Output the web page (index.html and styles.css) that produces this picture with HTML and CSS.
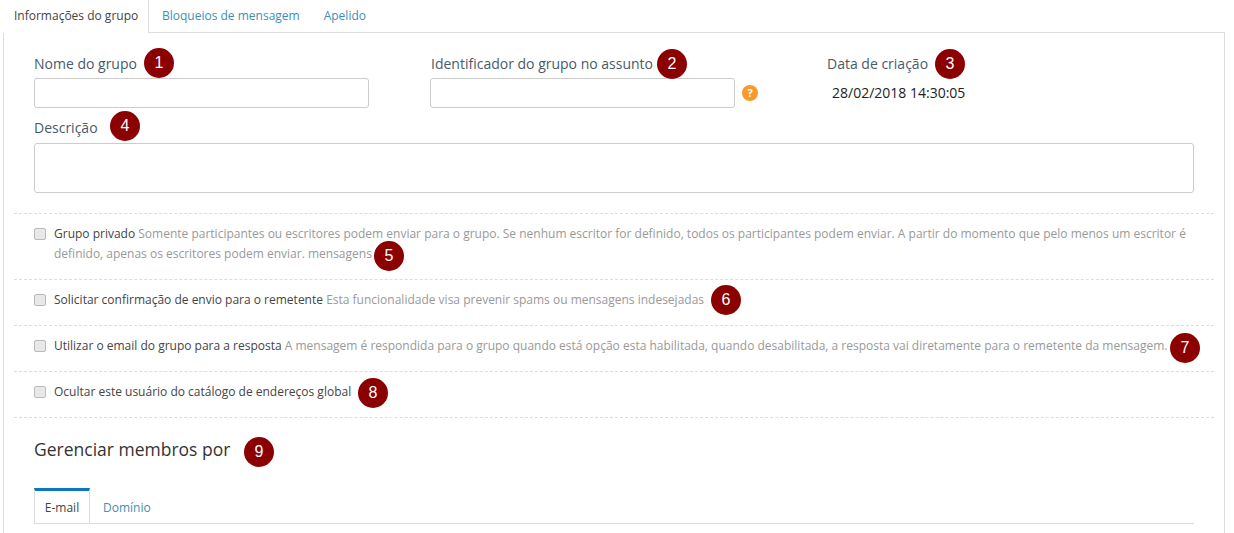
FILE: index.html
```html
<!doctype html>
<html>
<head>
    <meta charset="utf-8">
    <link rel="stylesheet" href="styles.css">
</head>
<body>
    <ul class="tabs">
        <li class="tab active">Informações do grupo</li>
        <li class="tab">Bloqueios de mensagem</li>
        <li class="tab">Apelido</li>
    </ul>
    <div class="panel">
        <div class="fields">
            <div class="field field-name">
                <label>Nome do grupo</label>
                <input type="text">
            </div>
            <div class="field field-subject">
                <label>Identificador do grupo no assunto</label>
                <div class="input-help">
                    <input type="text">
                    <span class="help">?</span>
                </div>
            </div>
            <div class="field field-date">
                <label>Data de criação</label>
                <div class="date">28/02/2018 14:30:05</div>
            </div>
        </div>
        <div class="field field-desc">
            <label>Descrição</label>
            <textarea></textarea>
        </div>

        <div class="option option-first">
            <span class="check"></span>
            <p>Grupo privado <span class="hint">Somente participantes ou escritores podem enviar para o grupo. Se nenhum escritor for definido, todos os participantes podem enviar. A partir do momento que pelo menos um escritor é definido, apenas os escritores podem enviar. mensagens</span></p>
        </div>
        <div class="option">
            <span class="check"></span>
            <p>Solicitar confirmação de envio para o remetente <span class="hint">Esta funcionalidade visa prevenir spams ou mensagens indesejadas</span></p>
        </div>
        <div class="option">
            <span class="check"></span>
            <p>Utilizar o email do grupo para a resposta <span class="hint">A mensagem é respondida para o grupo quando está opção esta habilitada, quando desabilitada, a resposta vai diretamente para o remetente da mensagem.</span></p>
        </div>
        <div class="option option-last">
            <span class="check"></span>
            <p>Ocultar este usuário do catálogo de endereços global</p>
        </div>

        <h2>Gerenciar membros por</h2>
        <ul class="subtabs">
            <li class="subtab active">E-mail</li>
            <li class="subtab">Domínio</li>
        </ul>
    </div>

    <span class="badge b1">1</span>
    <span class="badge b2">2</span>
    <span class="badge b3">3</span>
    <span class="badge b4">4</span>
    <span class="badge b5">5</span>
    <span class="badge b6">6</span>
    <span class="badge b7">7</span>
    <span class="badge b8">8</span>
    <span class="badge b9">9</span>
</body>
</html>
```
FILE: styles.css
```css
html, body {
    height: 100%;
}
body {
    margin: 0;
    height: 533px;
    padding-left: 3px;
    box-sizing: border-box;
    overflow: hidden;
    background: #fff;
    font-family: "Open Sans", sans-serif;
    font-size: 12px;
    color: #333;
    position: relative;
}
ul {
    list-style: none;
    margin: 0;
    padding: 0;
}
.tabs {
    display: flex;
    height: 33px;
    width: 1222px;
    box-sizing: border-box;
}
.tab {
    padding: 7px 11px 0 13px;
    color: #3d8fb5;
}
.tab.active {
    width: 146px;
    box-sizing: border-box;
    padding-left: 11px;
    padding-right: 0;
    height: 33px;
    color: #444;
    background: #fff;
    border-right: 1px solid #ddd;
    position: relative;
    z-index: 1;
}
.panel {
    width: 1222px;
    height: 501px;
    margin-top: -1px;
    box-sizing: border-box;
    border: 1px solid #ddd;
    border-bottom: 0;
    padding: 21px 10px 0;
}
.fields {
    display: flex;
    padding-left: 20px;
}
.field label {
    display: block;
    font-size: 14px;
    line-height: 20px;
    color: #4a5a6a;
    margin-bottom: 4px;
}
input, textarea {
    display: block;
    box-sizing: border-box;
    border: 1px solid #ccc;
    border-radius: 3px;
    background: #fff;
    margin: 0;
    resize: none;
    outline: 0;
}
.field-name {
    width: 396px;
}
.field-name input {
    width: 335px;
    height: 30px;
}
.field-subject {
    width: 397px;
}
.field-subject label {
    padding-left: 1px;
}
.field-subject input {
    width: 305px;
    height: 30px;
}
.input-help {
    display: flex;
    align-items: center;
    gap: 7px;
}
.help {
    width: 16px;
    height: 16px;
    border-radius: 50%;
    background: #f7992b;
    color: #fff;
    font-size: 11px;
    font-weight: 700;
    line-height: 16px;
    text-align: center;
}
.date {
    padding: 5px 0 0 5px;
    font-size: 14px;
    line-height: 20px;
    color: #222;
}
.field-desc {
    margin: 10px 0 0 20px;
}
.field-desc label {
    margin-bottom: 5px;
}
.field-desc textarea {
    width: 1160px;
    height: 50px;
}
.option {
    display: flex;
    gap: 8px;
    padding: 10px 20px 15px;
    width: 1200px;
    box-sizing: border-box;
    border-top: 1px dashed #ddd;
    line-height: 20px;
}
.option-first {
    margin-top: 20px;
}
.option-last {
    border-bottom: 1px dashed #ddd;
}
.option p {
    margin: 0;
    color: #444;
}
.hint {
    color: #999;
}
.check {
    flex: none;
    width: 12px;
    height: 12px;
    margin-top: 4px;
    box-sizing: border-box;
    border: 1px solid #bbb;
    border-radius: 2px;
    background: #e8e8e8;
}
h2 {
    margin: 20px 0 0 20px;
    font-size: 17.5px;
    font-weight: 400;
    line-height: 22px;
    color: #333;
}
.subtabs {
    display: flex;
    width: 1160px;
    height: 36px;
    margin: 28px 0 0 20px;
    box-sizing: border-box;
    border-bottom: 1px solid #ddd;
}
.subtab {
    padding: 11px 13px 0;
    color: #3d8fb5;
}
.subtab.active {
    width: 56px;
    box-sizing: border-box;
    padding: 8px 0 0;
    text-align: center;
    color: #444;
    border-top: 3px solid #0b76c4;
    border-left: 1px solid #ddd;
    border-right: 1px solid #ddd;
}
.badge {
    position: absolute;
    width: 30px;
    height: 30px;
    border-radius: 50%;
    background: #8b0000;
    color: #fff;
    font-family: "Liberation Sans", sans-serif;
    font-size: 16px;
    line-height: 30px;
    text-align: center;
}
.b1 { left: 144px; top: 48px; }
.b2 { left: 657px; top: 49px; }
.b3 { left: 935px; top: 49px; }
.b4 { left: 110px; top: 111px; }
.b5 { left: 374px; top: 241px; }
.b6 { left: 711px; top: 285px; }
.b7 { left: 1170px; top: 333px; }
.b8 { left: 358px; top: 378px; }
.b9 { left: 244px; top: 437px; }
```
